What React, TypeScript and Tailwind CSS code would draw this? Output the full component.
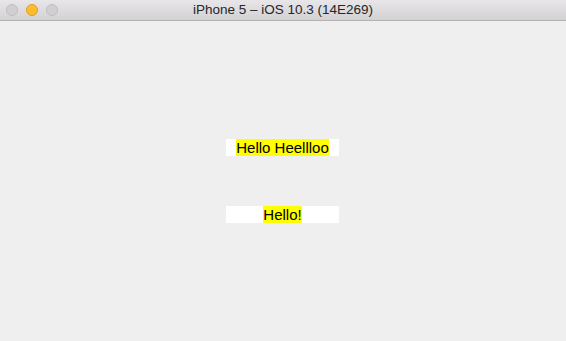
export default function App() {
	return (
		<div className="w-[566px] h-[341px] flex flex-col bg-[#efefef] overflow-hidden" style={{ fontFamily: '"Liberation Sans", Arial, sans-serif' }}>
			<div className="h-[21px] flex items-center relative bg-gradient-to-b from-[#e8e6e8] to-[#d3d1d3] border-b border-[#b3b1b3]">
				<div className="flex items-center gap-[8px] pl-[6px]">
					<span className="w-[12px] h-[12px] rounded-full bg-[#d0d0d0] border border-[#c0bfc0]" />
					<span className="w-[12px] h-[12px] rounded-full bg-[#fdbc2e] border border-[#e0a020]" />
					<span className="w-[12px] h-[12px] rounded-full bg-[#d0d0d0] border border-[#c0bfc0]" />
				</div>
				<div className="absolute inset-0 flex items-center justify-center text-[13.5px] text-[#262626]">
					iPhone 5 – iOS 10.3 (14E269)
				</div>
			</div>
			<div className="flex-1 flex flex-col items-center pt-[118px] gap-[50px] pr-[1px]">
				<div className="w-[113px] h-[17px] bg-white flex items-center justify-center">
					<span className="bg-[#ffff00] text-[15px] leading-[17px] text-black">Hello Heellloo</span>
				</div>
				<div className="w-[113px] h-[17px] bg-white flex items-center justify-center">
					<span className="bg-[#ffff00] text-[15px] leading-[17px] text-black">Hello!</span>
				</div>
			</div>
		</div>
	);
}
